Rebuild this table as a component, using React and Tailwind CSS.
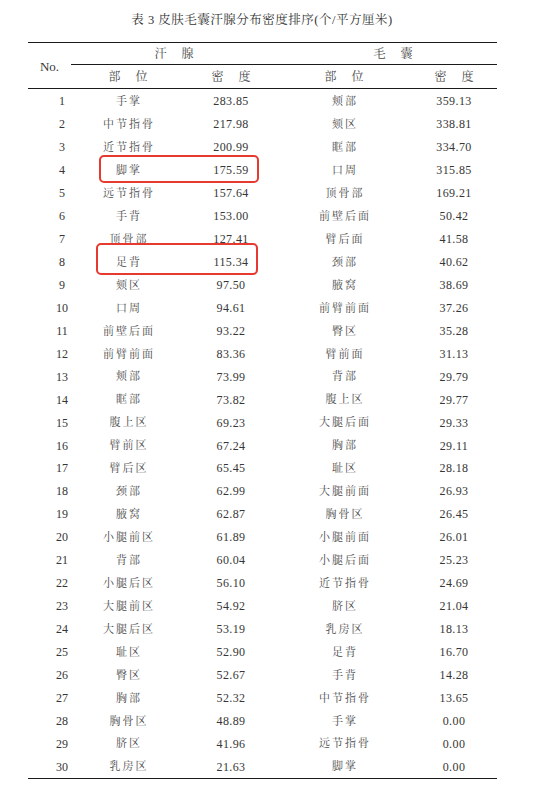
import React from 'react';

const rows = [
  ['1', '手掌', '283.85', '颊部', '359.13'],
  ['2', '中节指骨', '217.98', '颏区', '338.81'],
  ['3', '近节指骨', '200.99', '眶部', '334.70'],
  ['4', '脚掌', '175.59', '口周', '315.85'],
  ['5', '远节指骨', '157.64', '顶骨部', '169.21'],
  ['6', '手背', '153.00', '前壁后面', '50.42'],
  ['7', '顶骨部', '127.41', '臂后面', '41.58'],
  ['8', '足背', '115.34', '颈部', '40.62'],
  ['9', '颏区', '97.50', '腋窝', '38.69'],
  ['10', '口周', '94.61', '前臂前面', '37.26'],
  ['11', '前壁后面', '93.22', '臀区', '35.28'],
  ['12', '前臂前面', '83.36', '臂前面', '31.13'],
  ['13', '颊部', '73.99', '背部', '29.79'],
  ['14', '眶部', '73.82', '腹上区', '29.77'],
  ['15', '腹上区', '69.23', '大腿后面', '29.33'],
  ['16', '臂前区', '67.24', '胸部', '29.11'],
  ['17', '臂后区', '65.45', '耻区', '28.18'],
  ['18', '颈部', '62.99', '大腿前面', '26.93'],
  ['19', '腋窝', '62.87', '胸骨区', '26.45'],
  ['20', '小腿前区', '61.89', '小腿前面', '26.01'],
  ['21', '背部', '60.04', '小腿后面', '25.23'],
  ['22', '小腿后区', '56.10', '近节指骨', '24.69'],
  ['23', '大腿前区', '54.92', '脐区', '21.04'],
  ['24', '大腿后区', '53.19', '乳房区', '18.13'],
  ['25', '耻区', '52.90', '足背', '16.70'],
  ['26', '臀区', '52.67', '手背', '14.28'],
  ['27', '胸部', '52.32', '中节指骨', '13.65'],
  ['28', '胸骨区', '48.89', '手掌', '0.00'],
  ['29', '脐区', '41.96', '远节指骨', '0.00'],
  ['30', '乳房区', '21.63', '脚掌', '0.00'],
];

const cjk = "font-['Liberation_Serif','Noto_Serif_CJK_SC','Noto_Sans_CJK_SC',serif]";

// two-character header label with a wide gap, like "部 位"
const Label = ({ a, b }) => (
  <div className="flex justify-center gap-[15px] text-[12px] leading-none text-[#4a4a4a]">
    <span>{a}</span>
    <span>{b}</span>
  </div>
);

const Row = ({ r }) => (
  <div className="grid grid-cols-[43px_114px_92px_134px_86px] h-[22.94px] items-center text-[#363636]">
    <div className="pl-[25px] text-center text-[12px]">{r[0]}</div>
    <div className="text-center text-[11px] tracking-[2px] pl-[2px] text-[#4a4a4a]">{r[1]}</div>
    <div className="text-center text-[12px] tracking-[0.4px]">{r[2]}</div>
    <div className="text-center text-[11px] tracking-[2px] pl-[2px] text-[#4a4a4a]">{r[3]}</div>
    <div className="text-center text-[12px] tracking-[0.4px]">{r[4]}</div>
  </div>
);

export default function App() {
  return (
    <div className={`relative w-[548px] h-[795px] bg-white ${cjk}`}>
      <div className="pt-[12px] pr-[24px] h-[42px] text-center text-[12.5px] leading-[16px] tracking-[0.5px] text-[#333]">
        表 3 皮肤毛囊汗腺分布密度排序(个/平方厘米)
      </div>

      <div className="ml-[28px] w-[469px] border-t-[1.5px] border-b-[1.5px] border-[#1a1a1a]">
        {/* header */}
        <div className="flex border-b border-[#1a1a1a]">
          <div className="w-[43px] flex items-center justify-center text-[13px] text-[#363636] pt-[2px]">No.</div>
          <div className="flex-1">
            <div className="grid grid-cols-[206px_220px] h-[22px] items-center border-b border-[#1a1a1a]">
              <Label a="汗" b="腺" />
              <div className="pl-[12px]"><Label a="毛" b="囊" /></div>
            </div>
            <div className="grid grid-cols-[114px_92px_134px_86px] h-[23px] items-center">
              <Label a="部" b="位" />
              <Label a="密" b="度" />
              <Label a="部" b="位" />
              <Label a="密" b="度" />
            </div>
          </div>
        </div>

        {/* body */}
        <div className="pt-[1px]">
          {rows.map((r) => (
            <Row key={r[0]} r={r} />
          ))}
        </div>
      </div>

      {/* red annotation boxes */}
      <div className="absolute left-[99px] top-[155px] w-[160px] h-[28px] border-2 border-[#e6392f] rounded-[5px]" />
      <div className="absolute left-[96px] top-[243px] w-[162px] h-[32px] border-2 border-[#e6392f] rounded-[5px]" />
    </div>
  );
}
